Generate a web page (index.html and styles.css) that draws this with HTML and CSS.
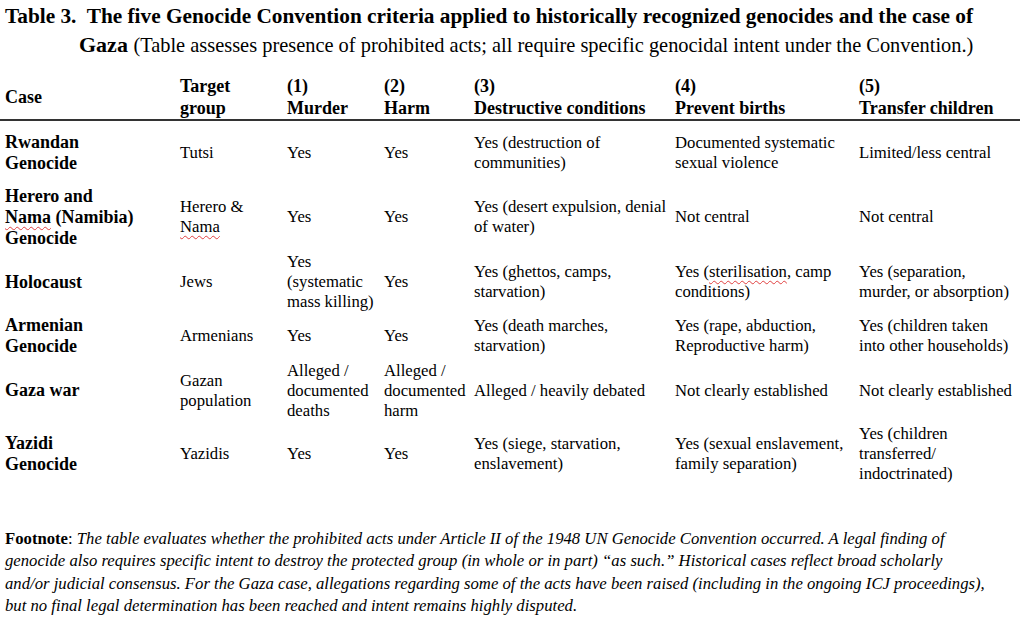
FILE: index.html
```html
<!DOCTYPE html>
<html lang="en">
<head>
<meta charset="utf-8">
<title>Table 3</title>
<link rel="stylesheet" href="styles.css">
</head>
<body>
<div class="page">
  <div class="caption">
    <div class="cap-line1">Table 3.&nbsp; The five Genocide Convention criteria applied to historically recognized genocides and the case of</div>
    <div class="cap-line2"><b>Gaza</b> <span class="cap-note">(Table assesses presence of prohibited acts; all require specific genocidal intent under the Convention.)</span></div>
  </div>

  <table class="crit">
    <colgroup>
      <col class="c0"><col class="c1"><col class="c2"><col class="c3"><col class="c4"><col class="c5"><col class="c6">
    </colgroup>
    <thead>
      <tr>
        <th>Case</th>
        <th>Target<br>group</th>
        <th>(1)<br>Murder</th>
        <th>(2)<br>Harm</th>
        <th>(3)<br>Destructive conditions</th>
        <th>(4)<br>Prevent births</th>
        <th>(5)<br>Transfer children</th>
      </tr>
    </thead>
    <tbody>
      <tr class="r1">
        <td class="case">Rwandan<br>Genocide</td>
        <td>Tutsi</td>
        <td>Yes</td>
        <td>Yes</td>
        <td>Yes (destruction of<br>communities)</td>
        <td>Documented systematic<br>sexual violence</td>
        <td>Limited/less central</td>
      </tr>
      <tr class="r2">
        <td class="case">Herero and<br><span class="sp">Nama</span> (Namibia)<br>Genocide</td>
        <td>Herero &amp;<br><span class="sp">Nama</span></td>
        <td>Yes</td>
        <td>Yes</td>
        <td>Yes (desert expulsion, denial<br>of water)</td>
        <td>Not central</td>
        <td>Not central</td>
      </tr>
      <tr class="r3">
        <td class="case">Holocaust</td>
        <td>Jews</td>
        <td>Yes<br>(systematic<br>mass killing)</td>
        <td>Yes</td>
        <td>Yes (ghettos, camps,<br>starvation)</td>
        <td>Yes (<span class="sp">sterilisation</span>, camp<br>conditions)</td>
        <td>Yes (separation,<br>murder, or absorption)</td>
      </tr>
      <tr class="r4">
        <td class="case">Armenian<br>Genocide</td>
        <td>Armenians</td>
        <td>Yes</td>
        <td>Yes</td>
        <td>Yes (death marches,<br>starvation)</td>
        <td>Yes (rape, abduction,<br>Reproductive harm)</td>
        <td>Yes (children taken<br>into other households)</td>
      </tr>
      <tr class="r5">
        <td class="case">Gaza war</td>
        <td>Gazan<br>population</td>
        <td>Alleged /<br>documented<br>deaths</td>
        <td>Alleged /<br>documented<br>harm</td>
        <td>Alleged / heavily debated</td>
        <td>Not clearly established</td>
        <td>Not clearly established</td>
      </tr>
      <tr class="r6">
        <td class="case">Yazidi<br>Genocide</td>
        <td>Yazidis</td>
        <td>Yes</td>
        <td>Yes</td>
        <td>Yes (siege, starvation,<br>enslavement)</td>
        <td>Yes (sexual enslavement,<br>family separation)</td>
        <td>Yes (children<br>transferred/<br>indoctrinated)</td>
      </tr>
    </tbody>
  </table>

  <p class="footnote"><b>Footnote</b>: <i>The table evaluates whether the prohibited acts under Article II of the 1948 UN Genocide Convention occurred. A legal finding of<br>genocide also requires specific intent to destroy the protected group (in whole or in part) “as such.” Historical cases reflect broad scholarly<br>and/or judicial consensus. For the Gaza case, allegations regarding some of the acts have been raised (including in the ongoing ICJ proceedings),<br>but no final legal determination has been reached and intent remains highly disputed.</i></p>
</div>
</body>
</html>
```

FILE: styles.css
```css
html, body {
  margin: 0;
  padding: 0;
  background: #ffffff;
}

body {
  font-family: "Liberation Serif", "Times New Roman", serif;
  color: #000000;
}

.page {
  width: 1024px;
  height: 620px;
  overflow: hidden;
}

.caption {
  padding: 2px 0 0 5px;
}

.cap-line1 {
  font-size: 21.3px;
  font-weight: bold;
  line-height: 28px;
  white-space: nowrap;
}

.cap-line2 {
  padding-left: 74px;
  font-size: 22px;
  line-height: 29px;
  white-space: nowrap;
}

.cap-note {
  font-size: 20.4px;
}

.crit {
  margin-top: 15px;
  width: 1020px;
  border-collapse: collapse;
  table-layout: fixed;
}

.c0 { width: 175px; }
.c1 { width: 107px; }
.c2 { width: 97px; }
.c3 { width: 90px; }
.c4 { width: 201px; }
.c5 { width: 184px; }
.c6 { width: 166px; }

.crit th {
  font-size: 18px;
  font-weight: bold;
  line-height: 22px;
  text-align: left;
  vertical-align: middle;
  padding: 0 0 0 5px;
  height: 44px;
  border-bottom: 2px solid #333333;
  white-space: nowrap;
}

.crit td {
  font-size: 16.7px;
  line-height: 20px;
  text-align: left;
  vertical-align: middle;
  padding: 0 0 0 5px;
  white-space: nowrap;
}

.crit td.case {
  font-size: 18px;
  font-weight: bold;
  line-height: 21px;
}

.r1 { height: 64px; }
.r2 { height: 66px; }
.r3 { height: 64px; }
.r4 { height: 44px; }
.r5 { height: 65px; }
.r6 { height: 62px; }

.sp {
  text-decoration: underline wavy #e04040;
  text-decoration-thickness: 1px;
  text-underline-offset: 3px;
}

.footnote {
  margin: 43px 0 0 5px;
  font-size: 16.7px;
  line-height: 22.3px;
}

.footnote i {
  font-style: italic;
}
```
